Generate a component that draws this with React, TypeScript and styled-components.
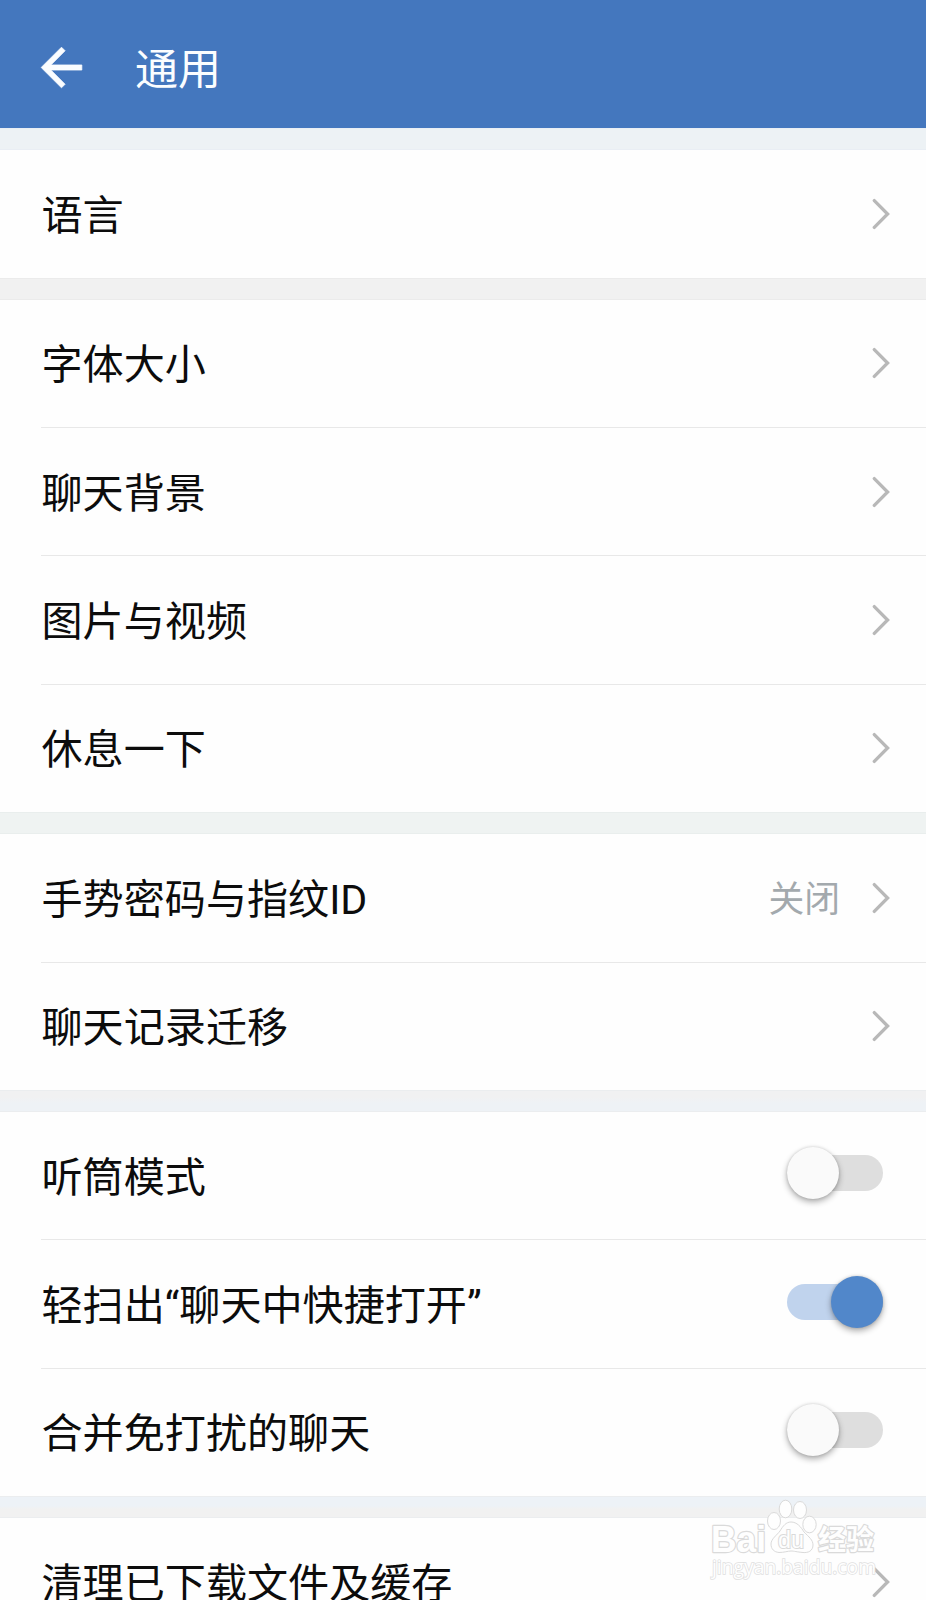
import React, { useState } from "react";
import styled, { createGlobalStyle } from "styled-components";

const GlobalStyle = createGlobalStyle`
  * { box-sizing: border-box; }
  html, body { margin: 0; padding: 0; }
  body { background: #fefefe; overflow: hidden; }
`;

const Screen = styled.main`
  position: relative;
  width: 926px;
  height: 1600px;
  overflow: hidden;
  display: flex;
  flex-direction: column;
  background: #fefefe;
  color: #0c0c0c;
  font-family: Roboto, "Noto Sans CJK SC", sans-serif;
`;

const Header = styled.header`
  flex: none;
  display: flex;
  align-items: center;
  gap: 43px;
  height: 128.4px;
  padding: 6px 0 0 31px;
  background: #4477be;
  color: #fbfdff;
`;

const BackButton = styled.button`
  display: flex;
  width: 61px;
  height: 61px;
  padding: 0;
  border: 0;
  background: none;
  color: inherit;
`;

const Title = styled.h1`
  margin: 6px 0 0;
  font-size: 43px;
  line-height: 60px;
  font-weight: 400;
`;

const Gap = styled.div<{ $fill: string; $edge: string; $height?: number }>`
  flex: none;
  height: ${(p) => p.$height ?? 22.4}px;
  background: ${(p) => p.$fill};
  border-top: 1px solid ${(p) => p.$edge};
  border-bottom: 1px solid ${(p) => p.$edge};
`;

const Group = styled.section`
  flex: none;
  display: flex;
  flex-direction: column;
`;

const Row = styled.div`
  display: flex;
  align-items: center;
  height: 127.35px;
  padding: 0 36px 0 41.5px;
`;

const Divider = styled.div`
  height: 1px;
  margin-left: 41px;
  background: #e8e8e8;
`;

const Label = styled.span`
  flex: 1;
  padding-top: 4px;
  font-size: 41.1px;
  line-height: 60px;
  white-space: nowrap;
`;

const Value = styled.span`
  padding-top: 5px;
  margin-right: 32px;
  color: #a3a9ad;
  font-size: 35.8px;
  line-height: 50px;
  font-weight: 400;
`;

const ChevronIcon = styled.svg`
  flex: none;
  width: 18px;
  height: 32px;
`;

const Track = styled.button<{ $on: boolean }>`
  display: flex;
  align-items: center;
  justify-content: ${(p) => (p.$on ? "flex-end" : "flex-start")};
  width: 96px;
  height: 36px;
  margin: 0 7px 5px 0;
  padding: 0;
  border: 0;
  border-radius: 18px;
  background: ${(p) => (p.$on ? "#c0d3ed" : "#dedede")};
`;

const Thumb = styled.span<{ $on: boolean }>`
  flex: none;
  width: 52px;
  height: 52px;
  border-radius: 50%;
  background: ${(p) => (p.$on ? "#5187ca" : "#fafafa")};
  box-shadow: 0 3px 6px rgba(0, 0, 0, 0.32), 0 0 3px rgba(0, 0, 0, 0.14);
`;

const Watermark = styled.svg`
  position: absolute;
  left: 700px;
  top: 1490px;
  width: 226px;
  height: 110px;
  pointer-events: none;
`;

const Chevron = () => (
  <ChevronIcon viewBox="0 0 18 32" fill="none" stroke="#b8b8b8" strokeWidth="3.3" strokeLinecap="round">
    <path d="M2.3 2.6 L15.6 16 L2.3 29.4" />
  </ChevronIcon>
);

const Toggle = ({ initial, label }: { initial: boolean; label: string }) => {
  const [on, setOn] = useState(initial);
  return (
    <Track $on={on} role="switch" aria-checked={on} aria-label={label} onClick={() => setOn(!on)}>
      <Thumb $on={on} />
    </Track>
  );
};

type Item = { label: string; value?: string; toggle?: boolean };
type Section = { fill: string; edge: string; gap?: number; items: Item[] };

const sections: Section[] = [
  { fill: "#edf2f5", edge: "#e9eef4", gap: 22, items: [{ label: "语言" }] },
  {
    fill: "#f1f1f1",
    edge: "#ebebeb",
    gap: 21.8,
    items: [{ label: "字体大小" }, { label: "聊天背景" }, { label: "图片与视频" }, { label: "休息一下" }],
  },
  {
    fill: "#eff3f2",
    edge: "#e9eeed",
    items: [{ label: "手势密码与指纹ID", value: "关闭" }, { label: "聊天记录迁移" }],
  },
  {
    fill: "linear-gradient(#f1f1f2 30%, #eef2f6 60%)",
    edge: "#ebedef",
    gap: 22,
    items: [
      { label: "听筒模式", toggle: false },
      { label: "轻扫出“聊天中快捷打开”", toggle: true },
      { label: "合并免打扰的聊天", toggle: false },
    ],
  },
  {
    fill: "linear-gradient(#edf2f7 45%, #f1f1f1 60%)",
    edge: "#ebedef",
    gap: 22,
    items: [{ label: "清理已下载文件及缓存" }],
  },
];

export default function App() {
  return (
    <>
      <GlobalStyle />
      <Screen>
        <Header>
          <BackButton aria-label="返回">
            <svg
              viewBox="0 0 24 24"
              width="61"
              height="61"
              fill="currentColor"
              stroke="currentColor"
              strokeWidth="0.3"
            >
              <path d="M20 11H7.83l5.59-5.59L12 4l-8 8 8 8 1.41-1.41L7.83 13H20v-2z" />
            </svg>
          </BackButton>
          <Title>通用</Title>
        </Header>
        {sections.map((section) => (
          <React.Fragment key={section.items[0].label}>
            <Gap $fill={section.fill} $edge={section.edge} $height={section.gap} />
            <Group>
              {section.items.map((item, i) => (
                <React.Fragment key={item.label}>
                  {i > 0 && <Divider />}
                  <Row>
                    <Label>{item.label}</Label>
                    {item.value && <Value>{item.value}</Value>}
                    {item.toggle === undefined ? <Chevron /> : <Toggle initial={item.toggle} label={item.label} />}
                  </Row>
                </React.Fragment>
              ))}
            </Group>
          </React.Fragment>
        ))}
        <Watermark viewBox="0 0 226 110" fill="#fefefe" stroke="#dadada" strokeWidth="1">
          <path d="M91 32 C97 32 101 37 104 42 C109 47 113 50 113 55 C113 61 108 63 103 62.5 C97 62 94 61 91 61 C88 61 84 62.5 79 62.5 C74 62 71 59 71 54 C71 49 77 45 80 41 C83 36 86 32 91 32Z" />
          <ellipse cx="74" cy="31" rx="6.5" ry="8.5" />
          <ellipse cx="85.5" cy="19" rx="6.3" ry="8.8" />
          <ellipse cx="100" cy="20" rx="6.5" ry="8.5" />
          <ellipse cx="109.5" cy="34.5" rx="6.7" ry="8.3" />
          <g
            strokeWidth="2.4"
            strokeLinejoin="round"
            paintOrder="stroke"
            fontFamily="'Liberation Sans', 'Noto Sans CJK SC', sans-serif"
            fontWeight="700"
          >
            <text x="11" y="61.5" fontSize="37" textLength="55" lengthAdjust="spacingAndGlyphs">Bai</text>
            <text x="118" y="60" fontSize="28" textLength="56" lengthAdjust="spacingAndGlyphs">经验</text>
          </g>
          <text
            x="78"
            y="58"
            fontSize="23"
            strokeWidth="2"
            paintOrder="stroke"
            fontFamily="'Liberation Sans', sans-serif"
            textLength="26"
            lengthAdjust="spacingAndGlyphs"
          >
            du
          </text>
          <text
            x="12"
            y="84"
            fontSize="20.5"
            stroke="#e0e0e0"
            strokeWidth="1.6"
            paintOrder="stroke"
            fontFamily="'Open Sans', sans-serif"
            textLength="164"
            lengthAdjust="spacingAndGlyphs"
          >
            jingyan.baidu.com
          </text>
        </Watermark>
      </Screen>
    </>
  );
}
